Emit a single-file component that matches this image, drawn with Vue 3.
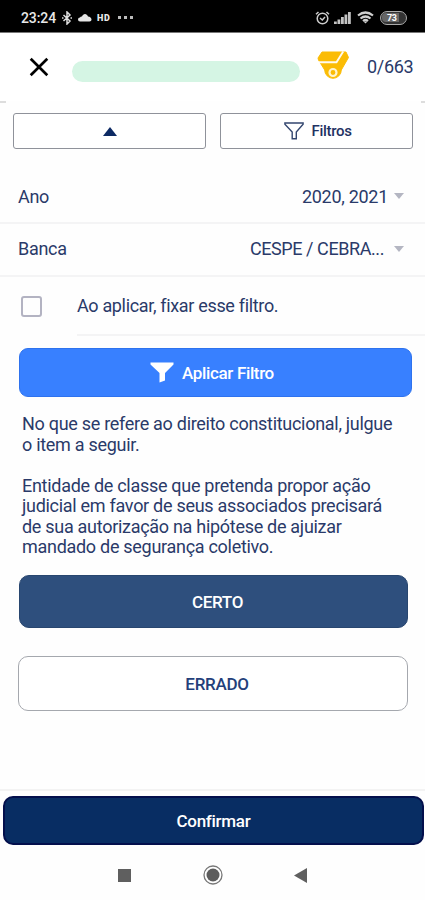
<script setup>
import { ref } from 'vue'

const fixFilter = ref(false)
const selected = ref('certo')

const filters = [
  { label: 'Ano', value: '2020, 2021', name: 'ano' },
  { label: 'Banca', value: 'CESPE / CEBRA...', name: 'banca' }
]

const question = [
  ['No que se refere ao direito constitucional, julgue', 'o item a seguir.'],
  [
    'Entidade de classe que pretenda propor ação',
    'judicial em favor de seus associados precisará',
    'de sua autorização na hipótese de ajuizar',
    'mandado de segurança coletivo.'
  ]
]
</script>

<template>
  <div class="screen">
    <div class="status">
      <span class="status__time">23:24</span>
      <svg class="status__bt" width="10" height="14" viewBox="0 0 10 14" fill="none" stroke="#ddd" stroke-width="1.500">
        <path d="M1.500 4 8 10 5 13V1l3 3-6.500 6M0 7h1.500M8.500 7H10" />
      </svg>
      <svg class="status__cloud" width="14" height="9" viewBox="0 0 14 9" fill="#e6e6e6">
        <path d="M2 8.500a2 2 0 0 1 0-4C2.500 3.500 3.200 3.300 4 3.500 5 0 9 0 10 3.500c2 0 3.500 1.500 3.500 3 0 1.300-.8 2-2 2z" />
      </svg>
      <span class="status__hd">HD</span>
      <span class="status__dots"><i /><i /><i /></span>
      <span class="status__gap" />
      <svg width="15" height="14" viewBox="0 0 15 14" fill="none" stroke="#ccc" stroke-width="1.500">
        <circle cx="7.500" cy="7.500" r="5.300" />
        <path d="M1 3.300 3.500 1M14 3.300 11.500 1M5 7l2.300 2L10 6" />
      </svg>
      <svg class="status__signal" width="17" height="12" viewBox="0 0 17 12" fill="#c4c4c4">
        <path d="M0 9.500h2.800V12H0zM3.500 7.500h2.800V12H3.500zM7 5h2.800v7H7zM10.500 2.500h2.800V12h-2.800zM14 0h2.800v12H14z" />
      </svg>
      <svg class="status__wifi" width="17" height="13" viewBox="0 0 17 13" fill="none" stroke="#d0d0d0" stroke-width="2.200">
        <path d="M1 4.500q7.500-6 15 0M3.500 7.500q5-4 10 0M6 10q2.500-2 5 0" />
        <path d="M6.500 10.500h4l-2 2z" fill="#d0d0d0" stroke="none" />
      </svg>
      <span class="battery"><span class="battery__level">73</span></span>
    </div>

    <header class="header">
      <svg class="header__close" width="20" height="20" viewBox="0 0 20 20" fill="none" stroke="#000" stroke-width="2.700">
        <path d="m1.700 1.700 16.600 16.600M18.300 1.700 1.700 18.300" />
      </svg>
      <div class="progress" />
      <svg class="header__medal" width="32" height="31" viewBox="0 0 32 31">
        <path d="M5 1h24l2.500 5.500L24.300 19a8.300 8.300 0 1 1-16.600 0L1.500 9 1 7z" fill="#fbbc05" stroke="#fbbc05" stroke-linejoin="round" />
        <path d="M2 11.300h17.500L26.200.500" fill="none" stroke="#fffaf0" stroke-width="1.900" />
        <circle cx="16" cy="21.500" r="3.500" fill="#fbbc05" stroke="#fff4cf" stroke-width="2.200" />
      </svg>
      <span class="header__count">0/663</span>
    </header>
    <div class="edges"><i /><i /></div>

    <div class="toggles">
      <button class="toggle">
        <svg width="14" height="9" viewBox="0 0 14 9" fill="#0d2a63"><path d="M7 0 14 9H0z" /></svg>
      </button>
      <button class="toggle">
        <svg width="20" height="18" viewBox="0 0 20 18" fill="none" stroke="#33466f" stroke-width="1.400">
          <path d="M.9 1h18.200v1.300L12.300 10v6.700H8.200V10L.9 2.300z" />
        </svg>
        <span class="toggle__label">Filtros</span>
      </button>
    </div>

    <div v-for="filter in filters" :key="filter.name" class="row" :class="`row--${filter.name}`">
      <span class="row__label">{{ filter.label }}</span>
      <span class="row__value">{{ filter.value }}</span>
      <svg width="10" height="6" viewBox="0 0 10 6" fill="#b4b6c2"><path d="M0 0h10L5 6z" /></svg>
    </div>

    <div class="fix" @click="fixFilter = !fixFilter">
      <span class="fix__box" :class="{ checked: fixFilter }" />
      <span class="fix__text">Ao aplicar, fixar esse filtro.</span>
    </div>

    <button class="apply">
      <svg width="24" height="21" viewBox="0 0 24 21" fill="#fff"><path d="M.5.500h23v2L15 11v7.500L9.500 20.500V11L.5 2.500z" /></svg>
      <span>Aplicar Filtro</span>
    </button>

    <div class="question">
      <p v-for="(lines, index) in question" :key="index">
        <span v-for="line in lines" :key="line" class="line">{{ line }}</span>
      </p>
    </div>

    <button class="answer answer--certo" :class="{ active: selected === 'certo' }" @click="selected = 'certo'">
      CERTO
    </button>
    <button class="answer answer--errado" :class="{ active: selected === 'errado' }" @click="selected = 'errado'">
      ERRADO
    </button>

    <footer class="footer">
      <button class="confirm">Confirmar</button>
    </footer>

    <nav class="nav">
      <svg width="13" height="13" viewBox="0 0 13 13"><path d="M0 0h13v13H0z" fill="#5f5f5f" /></svg>
      <svg width="20" height="20" viewBox="0 0 20 20">
        <circle cx="10" cy="10" r="9" fill="none" stroke="#777" stroke-width="1.300" />
        <circle cx="10" cy="10" r="6.500" fill="#5c5c5c" />
      </svg>
      <svg width="13" height="15" viewBox="0 0 13 15"><path d="M13 0v15L0 7.500z" fill="#5f5f5f" /></svg>
    </nav>
  </div>
</template>

<style>
body {
  margin: 0;
  background: #fefefe;
}
</style>

<style scoped>
.screen {
  display: flex;
  flex-direction: column;
  width: 425px;
  height: 900px;
  overflow: hidden;
  background: #fefefe;
  color: #2a3a69;
  font-family: Roboto, sans-serif;
  font-size: 18px;
  letter-spacing: -0.29px;
}

.screen * {
  box-sizing: border-box;
}

svg {
  display: block;
  flex: none;
}

button {
  display: flex;
  align-items: center;
  justify-content: center;
  padding: 0;
  font-family: inherit;
  letter-spacing: inherit;
  white-space: nowrap;
  cursor: pointer;
}

.status {
  display: flex;
  align-items: center;
  flex: none;
  height: 33px;
  padding: 3px 18px 0 21px;
  background: #000;
  border-bottom: 1px solid #777;
  color: #e8e8e8;
}

.status__time {
  width: 36px;
  font-size: 14px;
  font-weight: 500;
  letter-spacing: -0.1px;
}

.status__bt {
  margin-left: 5px;
}

.status__cloud {
  margin-left: 6px;
}

.status__hd {
  width: 15px;
  margin-left: 5px;
  font-size: 9px;
  font-weight: 900;
  letter-spacing: 0.6px;
}

.status__dots {
  display: flex;
  gap: 3px;
  margin-left: 6px;
}

.status__dots i {
  width: 3px;
  height: 3px;
  background: #bbb;
}

.status__gap {
  flex: 1;
}

.status__signal {
  margin-left: 4px;
}

.status__wifi {
  margin-left: 6px;
}

.battery {
  width: 27px;
  height: 14px;
  margin-left: 6px;
  padding: 1px;
  border: 1.5px solid #aaa;
  border-radius: 7px;
  background: #333;
}

.battery__level {
  display: block;
  width: 17px;
  height: 9px;
  padding-left: 5px;
  border-radius: 4px 0 0 4px;
  background: #666;
  color: #fff;
  font-size: 9px;
  font-weight: 700;
  line-height: 10px;
}

.header {
  display: flex;
  align-items: center;
  flex: none;
  height: 68px;
  padding-left: 29px;
  background: #fff;
}

.header__close {
  margin-right: 23px;
}

.progress {
  width: 228px;
  height: 21px;
  margin-top: 8px;
  border-radius: 11px;
  background: #d5f5e4;
}

.header__medal {
  margin: -1px 0 0 17px;
}

.header__count {
  margin: -2px 0 0 18px;
  letter-spacing: -0.3px;
}

.edges {
  display: flex;
  justify-content: space-between;
  flex: none;
  height: 12px;
}

.edges i {
  width: 6px;
  height: 2px;
  background: #ddd;
}

.edges i:last-child {
  width: 4px;
}

.toggles {
  display: flex;
  gap: 14px;
  flex: none;
  padding: 0 12px 0 13px;
}

.toggle {
  flex: 1;
  gap: 7px;
  height: 36px;
  border: 1px solid #8f929a;
  border-radius: 3px;
  background: #fff;
  color: #1f3263;
}

.toggle__label {
  margin-right: -3px;
  font-size: 15px;
  font-weight: 500;
  letter-spacing: -0.3px;
}

.row {
  display: flex;
  align-items: center;
  flex: none;
  padding: 0 21px 0 18px;
  border-bottom: 2px solid #f4f4f5;
}

.row--ano {
  height: 54px;
  margin-top: 21px;
}

.row--ano .row__value {
  margin-right: 6px;
}

.row--banca {
  height: 53px;
  padding-bottom: 2px;
}

.row--banca .row__value {
  letter-spacing: -0.42px;
}

.row__value {
  margin-left: auto;
  margin-right: 10px;
}

.fix {
  display: flex;
  align-items: center;
  flex: none;
  height: 59px;
  padding-left: 21px;
}

.fix__box {
  flex: none;
  width: 21px;
  height: 21px;
  margin-right: 35px;
  border: 2px solid #b3b3c2;
  border-radius: 3px;
}

.fix__box.checked {
  background: #3880ff;
}

.fix__text {
  display: flex;
  align-items: center;
  flex: 1;
  height: 100%;
  border-bottom: 2px solid #f4f4f5;
  letter-spacing: -0.33px;
  white-space: nowrap;
}

.apply {
  flex: none;
  gap: 8px;
  width: 393px;
  height: 49px;
  margin: 12px 0 0 19px;
  padding-right: 7px;
  border: 1px solid #2e72ee;
  border-radius: 9px;
  background: #3880ff;
  color: #fff;
  font-size: 17px;
  font-weight: 500;
  letter-spacing: -0.35px;
}

.question {
  flex: none;
  height: 178px;
  padding: 17px 0 0 22px;
  line-height: 20.5px;
  white-space: nowrap;
}

.question p {
  margin: 0 0 20.5px;
}

.line {
  display: block;
}

.answer {
  flex: none;
  width: 390px;
  height: 55px;
  margin: 28px 0 0 18px;
  padding-left: 8px;
  border: 1px solid #a5a8ae;
  border-radius: 10px;
  background: #fff;
  color: #24407a;
  font-size: 17px;
  font-weight: 500;
}

.answer--certo {
  width: 389px;
  height: 53px;
  margin: 0 0 0 19px;
}

.answer.active {
  border-color: #28466f;
  background: #2e4f7d;
  color: #fff;
}

.footer {
  flex: none;
  margin-top: auto;
  padding: 5px 1px 5px 3px;
  border-top: 2px solid #f3f3f3;
}

.confirm {
  width: 100%;
  height: 49px;
  border: 2px solid #030f4c;
  border-radius: 10px;
  background: #082d63;
  color: #fff;
  font-size: 17px;
  font-weight: 500;
}

.nav {
  display: flex;
  align-items: center;
  justify-content: space-between;
  flex: none;
  height: 50px;
  padding: 0 118px;
}
</style>
